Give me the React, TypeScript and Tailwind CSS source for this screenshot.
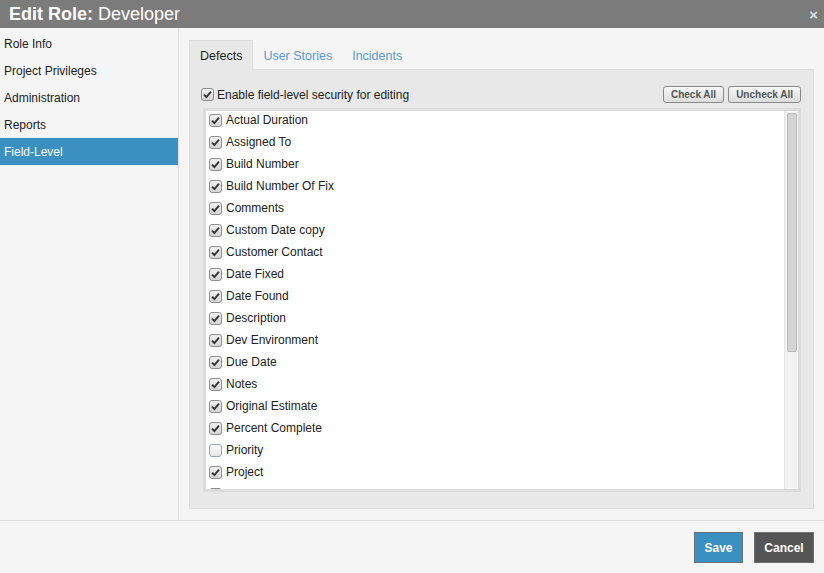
import React from "react";

const fields: { name: string; checked: boolean }[] = [
  { name: "Actual Duration", checked: true },
  { name: "Assigned To", checked: true },
  { name: "Build Number", checked: true },
  { name: "Build Number Of Fix", checked: true },
  { name: "Comments", checked: true },
  { name: "Custom Date copy", checked: true },
  { name: "Customer Contact", checked: true },
  { name: "Date Fixed", checked: true },
  { name: "Date Found", checked: true },
  { name: "Description", checked: true },
  { name: "Dev Environment", checked: true },
  { name: "Due Date", checked: true },
  { name: "Notes", checked: true },
  { name: "Original Estimate", checked: true },
  { name: "Percent Complete", checked: true },
  { name: "Priority", checked: false },
  { name: "Project", checked: true },
  { name: "Published Version", checked: true },
];

const nav = ["Role Info", "Project Privileges", "Administration", "Reports", "Field-Level"];

function Box({ checked }: { checked: boolean }) {
  if (!checked) {
    return (
      <span className="inline-block w-[13px] h-[13px] rounded-[3px] border border-[#9aa7b4] bg-gradient-to-b from-[#fbfbfb] to-[#e6e6e6] shrink-0" />
    );
  }
  return (
    <span className="inline-flex items-center justify-center w-[13px] h-[13px] rounded-[3px] border border-[#8e8e8e] bg-gradient-to-b from-[#f2f2f2] to-[#d6d6d6] shrink-0">
      <svg width="9" height="9" viewBox="0 0 9 9">
        <path d="M1 4.6 L3.4 7 L8 1.6" fill="none" stroke="#333" strokeWidth="1.9" />
      </svg>
    </span>
  );
}

export default function App() {
  return (
    <div className="w-[824px] h-[573px] flex flex-col bg-[#f5f5f5] font-['Liberation_Sans',Arial,sans-serif] text-[12px] text-[#222] overflow-hidden">
      <div className="h-[28px] shrink-0 bg-[#7b7b7b] flex items-center justify-between pl-[9px] pr-[6px] text-white">
        <div className="text-[18px] leading-none">
          <span className="font-bold">Edit Role:</span> Developer
        </div>
        <span className="text-[#dcdcdc] font-bold text-[15px] leading-none">×</span>
      </div>

      <div className="flex-1 flex min-h-0">
        <div className="w-[179px] shrink-0 border-r border-[#dedede] pt-[2px]">
          {nav.map((n) => (
            <div
              key={n}
              className={
                n === "Field-Level"
                  ? "h-[27px] flex items-center px-[4px] bg-[#3990c1] text-white"
                  : "h-[27px] flex items-center px-[4px] text-[#222]"
              }
            >
              {n}
            </div>
          ))}
        </div>

        <div className="flex-1 flex flex-col pl-[10px] pr-[10px] pt-[12px] pb-[11px]">
          <div className="flex h-[30px] shrink-0 text-[12.5px]">
            <div className="px-[10px] pt-[2px] flex items-center bg-[#e8e8e8] border border-b-0 border-[#dcdcdc] text-[#222] relative z-10">
              Defects
            </div>
            <div className="px-[10px] pt-[2px] flex items-center text-[#5b9bd5]">User Stories</div>
            <div className="px-[10px] pt-[2px] flex items-center text-[#5b9bd5]">Incidents</div>
          </div>
          <div className="flex-1 flex flex-col bg-[#e8e8e8] border border-[#dcdcdc] -mt-px pl-[11px] pr-[12px] pt-[15px] pb-[16px] min-h-0">
            <div className="flex items-center justify-between h-[19px] shrink-0">
              <label className="flex items-center gap-[3px]">
                <Box checked />
                <span>Enable field-level security for editing</span>
              </label>
              <div className="flex gap-[4px]">
                <button className="h-[17px] px-[7px] rounded-[3px] border border-[#8a8a8a] bg-gradient-to-b from-[#f7f7f7] to-[#dcdcdc] text-[10px] font-bold text-[#555] leading-none">
                  Check All
                </button>
                <button className="h-[17px] px-[7px] rounded-[3px] border border-[#8a8a8a] bg-gradient-to-b from-[#f7f7f7] to-[#dcdcdc] text-[10px] font-bold text-[#555] leading-none">
                  Uncheck All
                </button>
              </div>
            </div>
            <div className="relative flex-1 mt-[4px] ml-[2px] border-[3px] border-[#dcdcdc] bg-white overflow-hidden min-h-0">
              <div className="-mt-[2px] pl-[3px]">
                {fields.map((f) => (
                  <div key={f.name} className="h-[22px] flex items-center gap-[4px]">
                    <Box checked={f.checked} />
                    <span>{f.name}</span>
                  </div>
                ))}
              </div>
              <div className="absolute right-0 top-0 bottom-0 w-[14px] bg-[#f2f2f2] border-l border-[#e4e4e4]">
                <div className="mx-auto mt-[2px] w-[10px] h-[239px] bg-[#d4d4d4] border border-[#b8b8b8] rounded-[2px]" />
              </div>
            </div>
          </div>
        </div>
      </div>

      <div className="h-[53px] shrink-0 border-t border-[#dcdcdc] flex items-center justify-end gap-[11px] pr-[10px] pt-[1px]">
        <button className="h-[31px] w-[49px] bg-[#3990c1] border border-[#6f6f6f] text-white font-bold text-[12px]">
          Save
        </button>
        <button className="h-[31px] w-[60px] bg-[#555555] border border-[#6f6f6f] text-white font-bold text-[12px]">
          Cancel
        </button>
      </div>
    </div>
  );
}
